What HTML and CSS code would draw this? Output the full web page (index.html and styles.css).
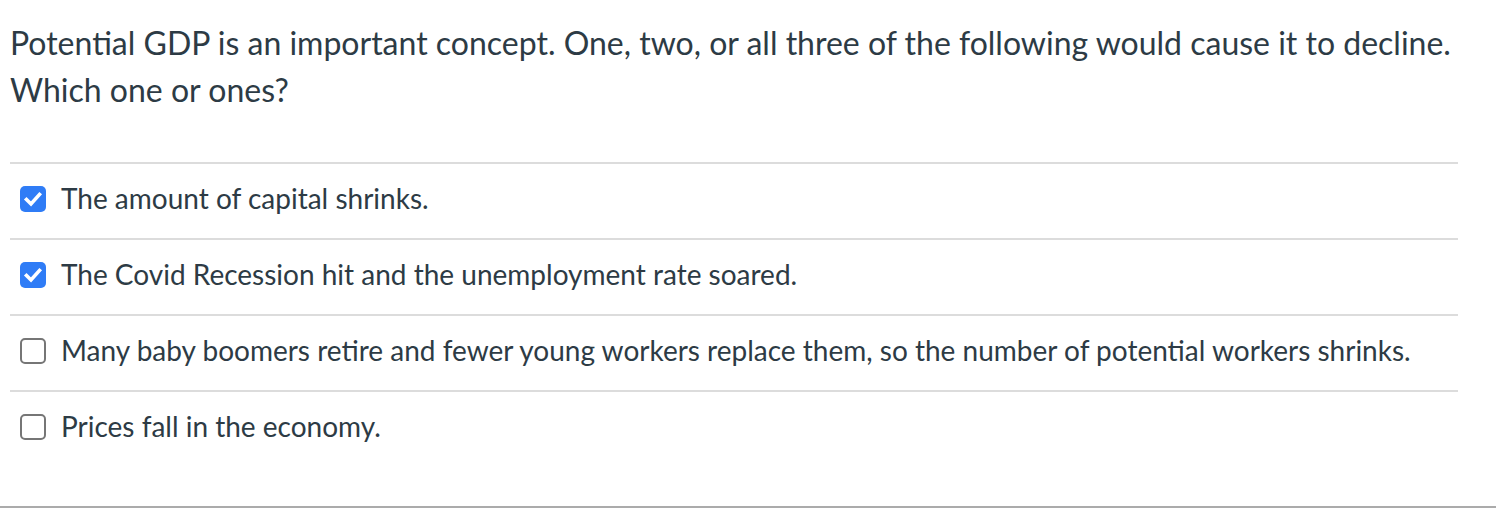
FILE: index.html
```html
<!DOCTYPE html>
<html>
<head>
<meta charset="utf-8">
<link rel="stylesheet" href="styles.css">
</head>
<body>
<div class="quiz">
  <div class="question">
    <p>Potential GDP is an important concept. One, two, or all three of the following would cause it to decline. Which one or ones?</p>
  </div>
  <div class="answers">
    <div class="answer">
      <span class="box checked"><svg viewBox="0 0 26 26" width="26" height="26"><path d="M6.5 13.5 L11 18 L19.5 8.5" fill="none" stroke="#fff" stroke-width="3.6" stroke-linecap="square" stroke-linejoin="miter"/></svg></span>
      <span class="label">The amount of capital shrinks.</span>
    </div>
    <div class="answer">
      <span class="box checked"><svg viewBox="0 0 26 26" width="26" height="26"><path d="M6.5 13.5 L11 18 L19.5 8.5" fill="none" stroke="#fff" stroke-width="3.6" stroke-linecap="square" stroke-linejoin="miter"/></svg></span>
      <span class="label">The Covid Recession hit and the unemployment rate soared.</span>
    </div>
    <div class="answer">
      <span class="box"></span>
      <span class="label">Many baby boomers retire and fewer young workers replace them, so the number of potential workers shrinks.</span>
    </div>
    <div class="answer">
      <span class="box"></span>
      <span class="label">Prices fall in the economy.</span>
    </div>
  </div>
</div>
<div class="footer-rule"></div>
</body>
</html>
```
FILE: styles.css
```css
html, body {
  margin: 0;
  padding: 0;
  background: #fff;
}
body {
  font-family: Lato, "Liberation Sans", sans-serif;
  color: #2d3b45;
}
.quiz {
  padding: 19px 38px 0 10px;
}
.question p {
  margin: 0;
  font-size: 32px;
  line-height: 47px;
}
.answers {
  margin-top: 49px;
}
.answer {
  display: flex;
  align-items: center;
  gap: 15px;
  height: 74px;
  border-top: 2px solid #dcdcdc;
  padding-left: 10px;
}
.box {
  width: 26px;
  height: 26px;
  box-sizing: border-box;
  border: 2px solid #767676;
  border-radius: 5px;
  background: #fff;
  flex: none;
  display: block;
  margin-bottom: 5px;
}
.box.checked {
  border: none;
  background: #2f7cf6;
}
.box svg {
  display: block;
}
.label {
  font-size: 28px;
  line-height: 32px;
  padding-bottom: 7px;
}
.footer-rule {
  margin-top: 40px;
  height: 2px;
  background: #ababab;
}
```
